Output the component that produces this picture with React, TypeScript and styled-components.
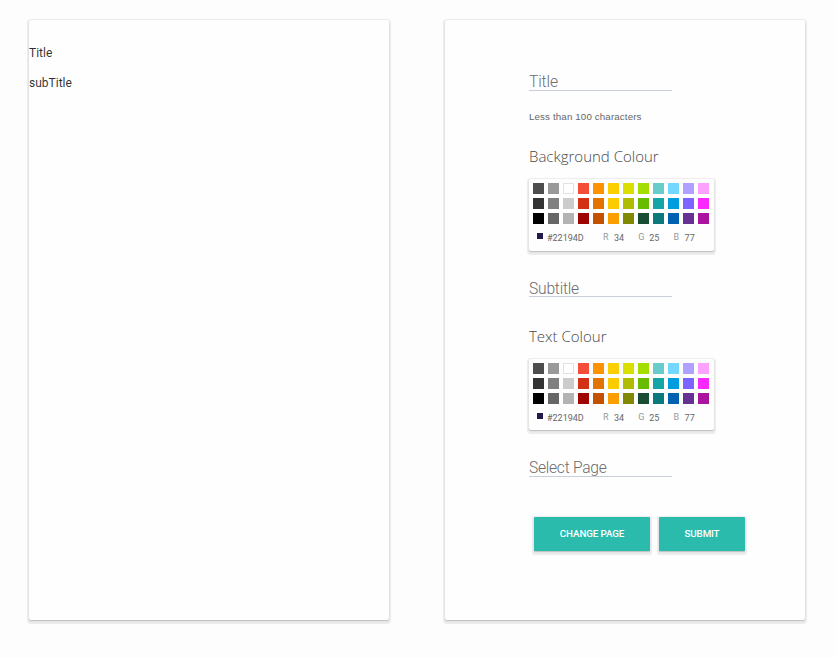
import React from "react";
import styled, { createGlobalStyle } from "styled-components";

const GlobalStyle = createGlobalStyle`
  * { box-sizing: border-box; }
  body { margin: 0; background: #fdfdfd; font-family: Roboto, "Liberation Sans", sans-serif; }
`;

const elevation = "0 1px 1px rgba(0,0,0,0.16), 0 1.5px 1px 2px rgba(0,0,0,0.075), 0 1px 2px 0 rgba(0,0,0,0.04)";

const Page = styled.main`
  display: flex;
  gap: 56px;
  height: 658px;
  padding: 20px 29px;
`;

const Card = styled.section`
  width: 360px;
  height: 600px;
  border-radius: 2px;
  background: #fefefe;
  box-shadow: ${elevation};
`;

const Preview = styled(Card)`
  padding-top: 25px;
  color: rgba(0, 0, 0, 0.82);
  font-size: 12px;
  line-height: 16px;
`;

const PreviewLine = styled.p`
  margin: 0 0 14px;
`;

const Form = styled(Card)`
  display: flex;
  flex-direction: column;
  align-items: flex-start;
  padding: 50px 0 0 84px;
`;

const Field = styled.div<{ $gap: number; $line?: number; $tracking?: number }>`
  width: 143px;
  height: 21px;
  margin-bottom: ${(p) => p.$gap}px;
  border-bottom: 1px solid #c9cfd8;
  color: #6c6c6c;
  font-size: 15.6px;
  font-weight: 300;
  letter-spacing: ${(p) => p.$tracking ?? 0}px;
  line-height: ${(p) => p.$line ?? 24}px;
  white-space: nowrap;
`;

const Hint = styled.div`
  height: 14px;
  margin-bottom: 22px;
  color: #666;
  font-family: "Liberation Sans", Arial, sans-serif;
  font-size: 9.75px;
  letter-spacing: 0.13px;
  line-height: 14px;
`;

const Label = styled.h2<{ $gap: number }>`
  height: 20px;
  margin: 0 0 ${(p) => p.$gap}px;
  color: #484848;
  font-family: "Open Sans", sans-serif;
  font-size: 15px;
  font-weight: 300;
  line-height: 20px;
`;

const Picker = styled.div<{ $gap: number; $height: number }>`
  width: 184.5px;
  height: ${(p) => p.$height}px;
  margin-bottom: ${(p) => p.$gap}px;
  padding: 4px;
  border-radius: 2px;
  background: #fefefe;
  box-shadow: ${elevation};
`;

const Swatches = styled.div`
  display: grid;
  grid-template-columns: repeat(12, 11px);
  grid-auto-rows: 11px;
  gap: 4px;
`;

const Swatch = styled.span<{ $color: string }>`
  background: ${(p) => p.$color};
  box-shadow: ${(p) => (p.$color === "#fff" ? "inset 0 0 0 1px #e2e2e2" : "none")};
`;

const Values = styled.div`
  display: flex;
  height: 22px;
  padding: 8px 0 0 4px;
  color: #666;
  font-size: 9px;
  line-height: 12px;
`;

const Chip = styled.span`
  width: 6px;
  height: 6px;
  margin: 1px 4px 0 0;
  background: #22194d;
`;

const Hex = styled.span`
  width: 56px;
`;

const Channel = styled.span`
  display: flex;
  width: 35.3px;
`;

const ChannelName = styled.span`
  width: 11px;
  margin-top: -1px;
  color: #999;
`;

const Actions = styled.div`
  display: flex;
  gap: 9px;
  padding-left: 5px;
`;

const Button = styled.button<{ $width: number }>`
  width: ${(p) => p.$width}px;
  height: 34px;
  padding: 0;
  border: 0;
  border-radius: 1px;
  background: #2bbbad;
  box-shadow: ${elevation};
  color: #fff;
  font-family: Roboto, sans-serif;
  font-size: 9.75px;
  font-weight: 500;
  letter-spacing: -0.1px;
  line-height: 34px;
  text-transform: uppercase;
`;

const COLORS = [
  "#4d4d4d", "#999999", "#fff", "#f44e3b", "#fe9200", "#fcd000", "#dbdf00", "#a4dd00", "#68ccca", "#73d8ff", "#aea1ff", "#fda1ff",
  "#333333", "#808080", "#cccccc", "#d33115", "#e27300", "#fccb00", "#b0bc00", "#68bc00", "#16a5a5", "#009ce0", "#7b64ff", "#fa28ff",
  "#000000", "#666666", "#b3b3b3", "#9f0500", "#c45100", "#fb9e00", "#808900", "#194d33", "#0c797d", "#0062b1", "#653294", "#ab149e",
];

const CHANNELS = [
  { name: "R", value: 34 },
  { name: "G", value: 25 },
  { name: "B", value: 77 },
];

function ColorPicker({ gap, height }: { gap: number; height: number }) {
  return (
    <Picker $gap={gap} $height={height}>
      <Swatches>
        {COLORS.map((c) => (
          <Swatch key={c} $color={c} />
        ))}
      </Swatches>
      <Values>
        <Chip />
        <Hex>#22194D</Hex>
        {CHANNELS.map((c) => (
          <Channel key={c.name}>
            <ChannelName>{c.name}</ChannelName>
            {c.value}
          </Channel>
        ))}
      </Values>
    </Picker>
  );
}

export default function App() {
  return (
    <>
      <GlobalStyle />
      <Page>
        <Preview>
          <PreviewLine>Title</PreviewLine>
          <PreviewLine>subTitle</PreviewLine>
        </Preview>
        <Form>
          <Field $gap={19} $tracking={-0.1}>Title</Field>
          <Hint>Less than 100 characters</Hint>
          <Label $gap={13}>Background Colour</Label>
          <ColorPicker gap={25} height={72} />
          <Field $gap={29} $line={26} $tracking={-0.2}>Subtitle</Field>
          <Label $gap={13}>Text Colour</Label>
          <ColorPicker gap={26} height={71} />
          <Field $gap={40} $tracking={-0.25}>Select Page</Field>
          <Actions>
            <Button $width={116}>Change Page</Button>
            <Button $width={86}>Submit</Button>
          </Actions>
        </Form>
      </Page>
    </>
  );
}
